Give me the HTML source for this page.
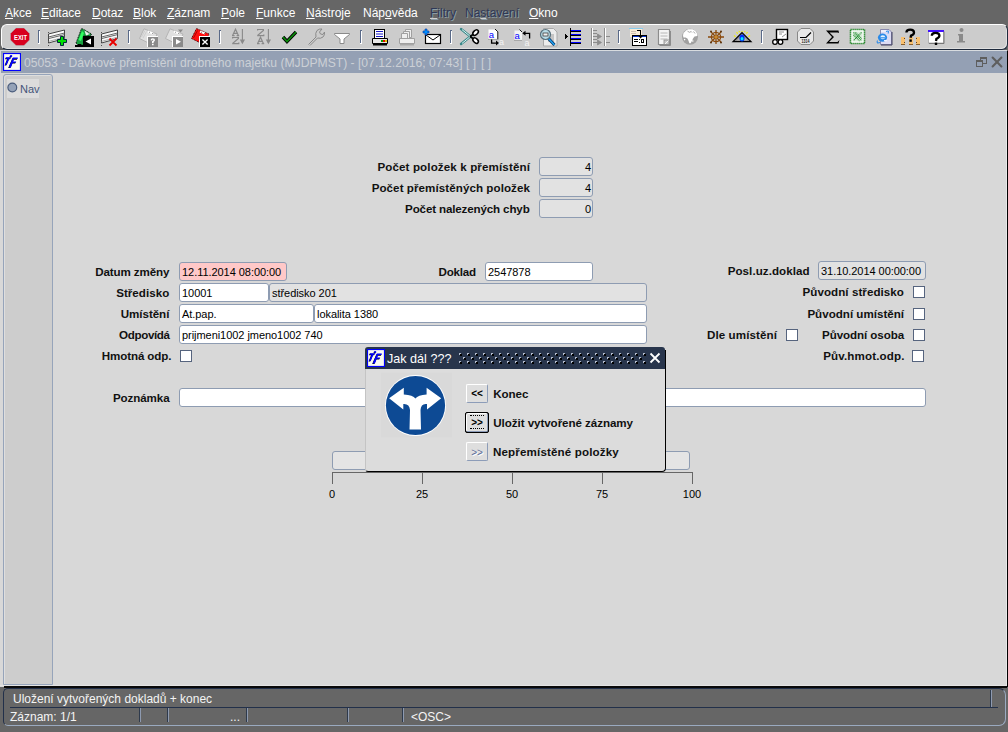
<!DOCTYPE html>
<html><head><meta charset="utf-8">
<style>
*{margin:0;padding:0;box-sizing:border-box}
html,body{width:1008px;height:732px;overflow:hidden;background:#666666;font-family:"Liberation Sans",sans-serif;font-size:12px}
.a{position:absolute;white-space:nowrap}
.m{position:absolute;top:6px;color:#fff;font-size:12px;line-height:14px;white-space:nowrap}
.m u{text-decoration:underline;text-underline-offset:1px}
.dis{color:#2e3856;text-shadow:1px 1px 0 #8c9ca4}
.dis u{text-decoration-color:#d0d0d0}
#tb{position:absolute;left:1px;top:24px;width:1007px;height:26px;background:#cccccc;border-radius:6px;border-top:1px solid #fff;border-left:1px solid #fff;border-bottom:1px solid #1e2a3c;border-right:1px solid #1e2a3c;box-shadow:inset -1px -1px 0 #e0e0e0}
#title{position:absolute;left:0px;top:50px;width:1007px;height:23px;background:#94a0b4;border-top:1px solid #d8dce0;border-left:1px solid #d8d8d8}
#content{position:absolute;left:0px;top:73px;width:1008px;height:614px;background:#d8d8d8;border-right:1px solid #000;box-shadow:inset -1px 0 0 #e8e8e8}
#nav{position:absolute;left:3px;top:74px;width:50px;height:611px;background:#cdcdcd;border:1px solid #96a4ba;border-radius:3px 3px 0 0;box-shadow:inset 1px 1px 0 #dedede}
.lbl{position:absolute;font-weight:bold;font-size:11.6px;color:#111;white-space:nowrap;line-height:14px}
.fld{position:absolute;background:#fff;border:1px solid #8e9cb2;border-radius:3px;font-size:11px;letter-spacing:-0.05px;line-height:16px;padding-top:1px;padding-left:2px;color:#000;white-space:nowrap;overflow:hidden}
.ro{background:#e2e2e2}
.chk{position:absolute;width:12px;height:12px;background:#fff;border:1px solid #56647e}
#status{position:absolute;left:0;top:688px;width:1008px;height:44px;background:#666}
.st{position:absolute;color:#f4f4f4;font-size:12px;line-height:14px;white-space:nowrap}
.vs{position:absolute;top:708px;width:2px;height:14px;border-left:1px solid #2e3a4c;border-right:1px solid #8e9ab0}
#dlg{position:absolute;left:365px;top:350px;width:301px;height:122px;background:#dcdcdc;border-left:1px solid #c4c4c4;border-right:1px solid #000;border-bottom:1px solid #000;border-radius:0 0 4px 3px}
.btn{position:absolute;width:22px;height:19px;background:#dedede;border:1px solid #fff;border-right-color:#8c9cb8;border-bottom-color:#8c9cb8;border-radius:2px;font-size:10px;font-weight:bold;line-height:18px;text-align:center;color:#000}
.tick{position:absolute;top:472px;width:1px;height:12px;background:#666}
.tl{position:absolute;top:488px;font-size:11px;line-height:12px;color:#000;width:40px;text-align:center}
</style></head><body>
<span class="m" style="left:5px"><u>A</u>kce</span>
<span class="m" style="left:41px"><u>E</u>ditace</span>
<span class="m" style="left:92px"><u>D</u>otaz</span>
<span class="m" style="left:133px"><u>B</u>lok</span>
<span class="m" style="left:167px"><u>Z</u>áznam</span>
<span class="m" style="left:221px"><u>P</u>ole</span>
<span class="m" style="left:256px"><u>F</u>unkce</span>
<span class="m" style="left:306px"><u>N</u>ástroje</span>
<span class="m" style="left:363px">Náp<u>o</u>věda</span>
<span class="m dis" style="left:430px"><u>F</u>iltry</span>
<span class="m dis" style="left:465px">Na<u>s</u>tavení</span>
<span class="m" style="left:529px"><u>O</u>kno</span>

<div id="tb"></div>
<svg class="a" style="left:0;top:0" width="1008" height="52" viewBox="0 0 1008 52">
<g shape-rendering="crispEdges">
<path d="M38 30h2v1h-1v12h-1z" fill="#5a6a88"/><path d="M39 31h1v13h-2v-1h1z" fill="#fff"/>
<path d="M128 30h2v1h-1v12h-1z" fill="#5a6a88"/><path d="M129 31h1v13h-2v-1h1z" fill="#fff"/>
<path d="M219 30h2v1h-1v12h-1z" fill="#5a6a88"/><path d="M220 31h1v13h-2v-1h1z" fill="#fff"/>
<path d="M360 30h2v1h-1v12h-1z" fill="#5a6a88"/><path d="M361 31h1v13h-2v-1h1z" fill="#fff"/>
<path d="M450 30h2v1h-1v12h-1z" fill="#5a6a88"/><path d="M451 31h1v13h-2v-1h1z" fill="#fff"/>
<path d="M618 30h2v1h-1v12h-1z" fill="#5a6a88"/><path d="M619 31h1v13h-2v-1h1z" fill="#fff"/>
<path d="M761 30h2v1h-1v12h-1z" fill="#5a6a88"/><path d="M762 31h1v13h-2v-1h1z" fill="#fff"/>
</g>
<!-- EXIT -->
<polygon points="16,28 24,28 29.5,33.5 29.5,40 24,45.5 16,45.5 10.5,40 10.5,33.5" fill="#d8001e" stroke="#9ad0d0" stroke-width="0.4"/>
<text x="14" y="39.8" font-family="Liberation Sans" font-weight="bold" font-size="7.4" fill="#fff" textLength="13" lengthAdjust="spacingAndGlyphs">EXIT</text>
<!-- rows add -->
<path d="M48.5 34 L64.5 30 L64.5 38.5 L48.5 43 Z" fill="#fafafa" stroke="#444" stroke-width="1"/>
<path d="M48.5 37 L64.5 33 M48.5 38.6 L64.5 34.6" stroke="#555" stroke-width="0.9" fill="none"/>
<path d="M48.5 41.4 L64.5 37.2" stroke="#999" stroke-width="0.8" fill="none"/>
<g shape-rendering="crispEdges" fill="#555"><rect x="48" y="32" width="1" height="1"/><rect x="48" y="45" width="1" height="1"/></g>
<path d="M60.5 36.5h3v3h3v3h-3v3h-3v-3h-3v-3h3z" fill="#00e000" stroke="#002838" stroke-width="1"/>
<!-- green folder -->
<path d="M76 43 L81.5 28.5 L84 29.5 L91.5 34 L90.5 36 L84 36 L84 45 L78 45 Z" fill="#18a040" stroke="#000" stroke-width="0.9" stroke-dasharray="1,0.8"/>
<path d="M78.5 40 L82 31 L84 33 L81 41 Z" fill="#30ff60"/>
<path d="M84.5 30.5 L90 34 L86 35.5 Z" fill="#f0f0f0"/>
<path d="M86.5 31.8h1M88 32.8h1" stroke="#666" stroke-width="0.8"/>
<g shape-rendering="crispEdges"><rect x="83" y="36" width="11" height="11" fill="#000"/><rect x="84" y="37" width="9" height="9" fill="#000"/><rect x="75" y="45" width="9" height="2" fill="#000"/><rect x="78" y="44" width="3" height="1" fill="#000"/></g>
<path d="M85.5 41.5 L91 38.5 L91 44.5 Z" fill="#fff"/>
<!-- rows delete -->
<path d="M101.5 34 L117.5 30 L117.5 38.5 L101.5 43 Z" fill="#fafafa" stroke="#444" stroke-width="1"/>
<path d="M101.5 37 L117.5 33 M101.5 38.6 L117.5 34.6" stroke="#555" stroke-width="0.9" fill="none"/>
<path d="M101.5 41.4 L117.5 37.2" stroke="#999" stroke-width="0.8" fill="none"/>
<g shape-rendering="crispEdges" fill="#555"><rect x="101" y="32" width="1" height="1"/><rect x="101" y="45" width="1" height="1"/></g>
<path d="M109.5 38.5 L116.5 45.5 M116.5 38.5 L109.5 45.5" stroke="#e80000" stroke-width="1.8"/>
<!-- gray disk ? -->
<path d="M139.5 38.5 L144 28.8 L157 34 L152.5 45 Z" fill="#e0e0e0" stroke="#b4b4b4" stroke-width="1"/>
<path d="M141.5 37 L145 30.5 M143 38 L146.5 31.5" stroke="#c8c8c8" stroke-width="0.8"/>
<path d="M148 31.5l5 2" stroke="#fff" stroke-width="2"/><path d="M149 32l1 0.5M152 33.2l1 0.4" stroke="#777" stroke-width="0.8"/>
<g shape-rendering="crispEdges"><rect x="147" y="36" width="11" height="11" fill="#fff"/><rect x="148" y="37" width="10" height="10" fill="#8a8a8a"/></g>
<path d="M150.6 40.2 Q150.6 38.3 152.8 38.3 Q155 38.3 155 40 Q155 41.2 153.6 41.9 L153.6 43 L152 43 L152 41.3 Q153.4 40.8 153.4 40.1 Q153.4 39.6 152.8 39.6 Q152.2 39.6 152.2 40.4 Z M152 43.8h1.6v1.5h-1.6z" fill="#fff"/>
<!-- gray disk play -->
<path d="M165.5 38.5 L170 28.8 L183 34 L178.5 45 Z" fill="#e0e0e0" stroke="#b4b4b4" stroke-width="1"/>
<path d="M174 31.5l5 2" stroke="#fff" stroke-width="2"/><path d="M175 32l1 0.5M178 33.2l1 0.4" stroke="#777" stroke-width="0.8"/>
<path d="M178 29.5h5l-2.5 3z" fill="#8a8a8a"/>
<g shape-rendering="crispEdges"><rect x="172" y="36" width="11" height="11" fill="#fff"/><rect x="173" y="37" width="10" height="10" fill="#8a8a8a"/></g>
<path d="M176 39 L181 41.8 L176 44.6 Z" fill="#fff"/>
<!-- red disk x -->
<path d="M191.5 38.5 L196.5 28.5 L209 34 L204.5 45 Z" fill="#ff1010" stroke="#300" stroke-width="0.9" stroke-dasharray="1,0.7"/>
<path d="M193.5 38 L197.5 30.5" stroke="#b00000" stroke-width="1"/>
<path d="M200 31.5l5 2" stroke="#fff" stroke-width="2"/><path d="M201 32l1 0.5M204 33.2l1 0.4" stroke="#555" stroke-width="0.8"/>
<g shape-rendering="crispEdges"><rect x="199" y="36" width="11" height="11" fill="#fff"/><rect x="200" y="37" width="10" height="10" fill="#000"/></g>
<path d="M202.4 39.6 L207.6 44.4 M207.6 39.6 L202.4 44.4" stroke="#fff" stroke-width="1.4"/>
<!-- AZ sort -->
<g fill="none" stroke="#8a8a8a" stroke-width="1.2">
<path d="M232.6 35.5 L235.5 29.2 L238.4 35.5 M233.8 33.3h3.4 M232 35.6h2.6 M236.6 35.6h2.6"/>
<path d="M232.6 38.5v-1h5.8v1 L232.8 43.2v0.4h6v-1.2"/>
<path d="M257.6 30.5v-1h5.8v1 L257.8 35.2v0.4h6v-1.2"/>
<path d="M257.6 43.5 L260.5 37.2 L263.4 43.5 M258.8 41.3h3.4 M257 43.6h2.6 M261.6 43.6h2.6"/>
<path d="M242.4 29v14 M268.4 29v14" stroke-width="1.1"/>
</g>
<path d="M239.8 39.5h5.2l-2.6 4.8z M265.8 39.5h5.2l-2.6 4.8z" fill="#8a8a8a"/>
<!-- check -->
<path d="M283 37 L287 41.5 L296 32" fill="none" stroke="#000" stroke-width="3.4"/>
<path d="M283 37 L287 41.5 L296 32" fill="none" stroke="#0a8a0a" stroke-width="1.8"/>
<!-- wrench -->
<path d="M308.5 44.5 L316 37 Q315 33 317 30.5 Q319.5 28.5 322 29 L319.5 32 L320.5 34 L323 34.5 L324.5 32 Q325 35 323 37 Q320.5 39 317.5 38 L310 45.5" fill="none" stroke="#8a8a8a" stroke-width="1"/>
<!-- funnel -->
<path d="M334.5 33.5 L349.5 33.5 L349.5 34.5 L344 39 L344 43.5 L340 43.5 L340 39 L334.5 34.5 Z" fill="#fff" stroke="#8a8a8a" stroke-width="1"/>
<!-- printer -->
<rect x="374.5" y="29.5" width="10" height="9" fill="#fff" stroke="#000"/>
<path d="M376 31.5h7M376 34h7M376 36.5h7" stroke="#0000c0" stroke-width="0.9"/>
<path d="M372.5 38.5h15v5h-15z" fill="#e8e8e8" stroke="#000"/>
<path d="M373 44h14v1.5h-14z" fill="#000"/>
<path d="M381 40h2v2h-2z" fill="#00a000"/><path d="M383 40h2v2h-2z" fill="#e00000"/><path d="M385 40h2v2h-2z" fill="#e0c000"/>
<!-- gray printers -->
<g fill="#eee" stroke="#a0a0a0">
<path d="M405.5 29.5h6v8h-6z"/><path d="M403.5 31.5h6v8h-6z"/><path d="M401.5 33.5h6v6h-6z"/>
<path d="M399.5 38.5h15v5h-15z"/>
</g>
<path d="M400 44h14v1.5h-14z" fill="#a8a8a8"/>
<!-- mail plus -->
<rect x="425.5" y="34.5" width="15" height="9" fill="#fff" stroke="#000" stroke-width="1.2"/>
<path d="M426 35 L433 40 L440 35" fill="none" stroke="#000"/>
<path d="M425 29h2v2h2v2h-2v2h-2v-2h-2v-2h2z" fill="#0090ff" stroke="#0030a0" stroke-width="0.6"/>
<!-- scissors -->
<path d="M461 29 L471 37 M461 44 L471 36" stroke="#3a8888" stroke-width="2.4" stroke-linecap="round"/>
<path d="M462 29.6 L470.5 36.6 M462 43.4 L470.5 36.4" stroke="#d8f4f4" stroke-width="1"/>
<ellipse cx="475.6" cy="32.6" rx="3.2" ry="2.1" transform="rotate(-45 475.6 32.6)" fill="#fff" stroke="#000" stroke-width="1.5"/>
<ellipse cx="475.6" cy="40.6" rx="3.2" ry="2.1" transform="rotate(45 475.6 40.6)" fill="#fff" stroke="#000" stroke-width="1.5"/>
<path d="M470 36.5 L473 34.5 M470 36.5 L473 38.5" stroke="#000" stroke-width="1.6"/>
<!-- a -> a -->
<path d="M488.5 29.5h7l2 2v7.5h-9z" fill="#fff"/>
<path d="M495 29l2.8 2.8v7.6" fill="none" stroke="#000" stroke-width="0.9"/>
<path d="M488 39.4h9.5" stroke="#999" stroke-width="0.8"/>
<text x="488.8" y="38" font-family="Liberation Sans" font-size="9.5" fill="#0000ff">a</text>
<path d="M491.6 39.5v3.6h5" fill="none" stroke="#000" stroke-width="1.3"/><path d="M496 40.6l3 2.5l-3 2.5z" fill="#000"/>
<text x="499" y="45" font-family="Liberation Sans" font-size="9" fill="#f4f4f4">a</text>
<!-- a <- a -->
<path d="M514.5 30.5h6l1.5 1.5v8h-7.5z" fill="#f4f4f4"/>
<path d="M519.5 29.5l2.5 2.5" stroke="#000" stroke-width="0.9"/>
<path d="M514 40.4h8" stroke="#999" stroke-width="0.8"/>
<text x="514.6" y="38.6" font-family="Liberation Sans" font-size="9.5" fill="#0000ff">a</text>
<path d="M529.6 38.5v-5.2h-5" fill="none" stroke="#000" stroke-width="1.3"/><path d="M525.5 30.8l-3.2 2.5l3.2 2.5z" fill="#000"/>
<text x="524.5" y="45.5" font-family="Liberation Sans" font-size="9" fill="#f4f4f4">a</text>
<!-- magnifier doc -->
<path d="M543.5 28.5h10l3.5 3.5v14h-13.5z" fill="#ececec" stroke="#a8a8a8"/>
<rect x="548" y="34" width="6" height="8" fill="#c4c4c4"/>
<path d="M548.5 38.5 L554.5 45" stroke="#003060" stroke-width="3"/>
<path d="M548.5 38.5 L554.5 45" stroke="#20a0f0" stroke-width="1.6"/>
<circle cx="545.5" cy="34.5" r="5" fill="#b8dce8" stroke="#58707c" stroke-width="1.2"/>
<rect x="543" y="33" width="5" height="3" fill="#f0f0f0" stroke="#404040" stroke-width="0.8"/>
<!-- blue list -->
<g shape-rendering="crispEdges">
<rect x="570" y="28" width="1" height="18" fill="#000"/>
<path d="M565 34h1v1h1v1h1v1h-1v1h-1v1h-1z" fill="#000"/>
<rect x="571" y="30" width="10" height="1" fill="#0000ff"/><rect x="571" y="31" width="10" height="1" fill="#000"/>
<rect x="571" y="34" width="10" height="1" fill="#0000ff"/><rect x="571" y="35" width="10" height="1" fill="#000"/>
<rect x="571" y="38" width="10" height="1" fill="#0000ff"/><rect x="571" y="39" width="10" height="1" fill="#000"/>
<rect x="571" y="42" width="10" height="1" fill="#0000ff"/><rect x="571" y="43" width="10" height="1" fill="#000"/>
</g>
<!-- gray tree -->
<g shape-rendering="crispEdges">
<rect x="591" y="28" width="1" height="18" fill="#8c8c8c"/><rect x="592" y="28" width="1" height="18" fill="#fff"/>
<rect x="604" y="28" width="1" height="18" fill="#8c8c8c"/><rect x="605" y="28" width="1" height="18" fill="#fff"/>
<g fill="#8c8c8c"><rect x="593" y="30" width="4" height="1"/><rect x="593" y="33" width="4" height="1"/><rect x="593" y="36" width="4" height="1"/><rect x="593" y="39" width="4" height="1"/><rect x="593" y="42" width="4" height="1"/>
<rect x="606" y="36" width="4" height="1"/><rect x="606" y="42" width="4" height="1"/></g>
</g>
<path d="M597.5 34l4 2.5l-4 2.5z M597.5 40l4 2.5l-4 2.5z M596 36.5h2 M596 42.5h2" fill="#8c8c8c" stroke="#8c8c8c" stroke-width="0.8"/>
<!-- doc import -->
<g shape-rendering="crispEdges">
<rect x="629" y="28" width="14" height="1" fill="#88ccee"/>
<rect x="630" y="29" width="12" height="8" fill="#f8ecd8"/>
<rect x="631" y="31" width="5" height="1" fill="#d0c0b0"/><rect x="631" y="33" width="5" height="1" fill="#d0c0b0"/>
<rect x="632" y="35" width="15" height="11" fill="#000"/>
<rect x="633" y="37" width="13" height="8" fill="#fff"/>
<rect x="633" y="36" width="13" height="1" fill="#0030d0"/>
<rect x="634" y="39" width="4" height="1" fill="#000"/><rect x="634" y="41" width="4" height="1" fill="#000"/><rect x="639" y="39" width="1" height="1" fill="#000"/><rect x="639" y="42" width="1" height="1" fill="#000"/>
<rect x="641" y="39" width="3" height="4" fill="#000"/><rect x="642" y="40" width="1" height="2" fill="#fff"/>
<rect x="637" y="30" width="4" height="1" fill="#000"/><rect x="640" y="30" width="1" height="6" fill="#000"/>
</g>
<path d="M637.6 35h6l-3 3.4z" fill="#000"/>
<!-- gray doc -->
<path d="M658.5 29.5h11v15h-11z" fill="#f4f4f4" stroke="#8c8c8c" stroke-width="1.2"/>
<path d="M670.5 31v14.5h-11" fill="none" stroke="#8c8c8c" stroke-width="1"/>
<path d="M660.5 33h7M660.5 36h7M660.5 39h7" stroke="#b0b0b0" stroke-width="0.9"/>
<rect x="664" y="40" width="5" height="4.5" fill="#c8c8c8" stroke="#8c8c8c" stroke-width="0.8"/>
<path d="M665 44l3.5-3.5" stroke="#fff" stroke-width="0.8"/>
<!-- globe -->
<circle cx="690" cy="36.8" r="8" fill="#a0a0a0"/>
<path d="M683 35.5 Q683.5 32 686 30.5 L688 29.3 L692.5 29.3 Q696 30.5 697.3 34 L697.3 36 L694.5 36.5 L693 38.5 L692.2 40.5 L690.6 43.2 L689.4 43.2 L688.4 40.5 L687.4 38.5 L685.6 37.4 L683.4 37.4 Z" fill="#fff"/>
<path d="M687.5 31.2 L689.5 32.3 L691.2 31.5 L692 32.5 M693.5 31.5 L695 33.5" fill="none" stroke="#a0a0a0" stroke-width="0.9"/>
<circle cx="684.6" cy="39.6" r="0.8" fill="#fff"/><circle cx="692.8" cy="41" r="0.8" fill="#fff"/>
<!-- ship wheel -->
<g stroke="#8a4a0c" stroke-width="1.3" fill="none">
<circle cx="716" cy="37" r="4.6"/>
<path d="M708 37h16M716 30v14M711 32l10 10M721 32l-10 10"/>
</g>
<g fill="#5a3008"><circle cx="711" cy="31.6" r="1"/><circle cx="721" cy="31.6" r="1"/><circle cx="711" cy="42.4" r="1"/><circle cx="721" cy="42.4" r="1"/></g>
<circle cx="716" cy="37" r="1.8" fill="#c88a30"/>
<!-- eye triangle -->
<path d="M733 41.6 L742 32.6 L751 41.6 Z" fill="#8c8c8c" stroke="#000" stroke-width="1.2" stroke-linejoin="miter"/>
<path d="M736.5 40.5 L742 35 L747.5 40.5 Z" fill="#b4b4b4"/>
<ellipse cx="742" cy="38" rx="2.6" ry="3.4" fill="#0030f0"/>
<ellipse cx="742" cy="38.8" rx="1.5" ry="1.8" fill="#00e8ff"/>
<g stroke="#f0f000" stroke-width="1.1"><path d="M734 35.5l1.5 1.2M750 35.5l-1.5 1.2M736.5 32.2l1.2 1.4M747.5 32.2l-1.2 1.4M742 31v1M738.8 31.2l0.8 1M745.2 31.2l-0.8 1"/></g>
<!-- chart glasses -->
<rect x="776.5" y="29.5" width="11" height="10" fill="#fff" stroke="#000" stroke-width="1.4"/>
<path d="M779 32h5M779 34h3M782 37l4-3" stroke="#777" stroke-width="0.8"/>
<circle cx="775" cy="42" r="2.3" fill="#fff" stroke="#000" stroke-width="1.3"/>
<circle cx="780.5" cy="42" r="2.3" fill="#fff" stroke="#000" stroke-width="1.3"/>
<!-- clock -->
<polygon points="801,28.5 810,28.5 813.5,32 813.5,41 810,44.5 801,44.5 797.5,41 797.5,32" fill="#e8e8e8" stroke="#888" stroke-width="1"/>
<path d="M800 37.5h6l5-5" stroke="#000" stroke-width="1.2" fill="none"/>
<text x="805.5" y="43" font-family="Liberation Sans" font-weight="bold" font-size="4.6" fill="#222" text-anchor="middle" textLength="8" lengthAdjust="spacingAndGlyphs">1314</text>
<!-- sigma -->
<path d="M826 30.5 L838.5 30.5 L839 33 L837.5 32.5 L829.5 32.5 L834 37 L829 42 L837.5 42 L839.5 40 L838.5 43.5 L826 43.5 L832 37 Z" fill="#000"/>
<!-- excel -->
<rect x="850.5" y="29.5" width="14" height="14" fill="#fff" stroke="#0a7a10" stroke-width="1.6" stroke-dasharray="1.2,0.8"/>
<rect x="852.5" y="31.5" width="10" height="10" fill="#d8ecd8"/>
<path d="M853.5 32.5l8 8M861.5 32.5l-8 8M853.5 35l6 6M855.5 32.5l6 6" stroke="#1a8a2a" stroke-width="1.1" stroke-dasharray="1,0.6"/>
<!-- IE doc -->
<path d="M880.5 29.5h8.5l2.5 2.5v12.5h-11z" fill="#dcdcf4" stroke="#8080a8" stroke-width="0.9"/>
<path d="M892 32v13h-11" fill="none" stroke="#404060" stroke-width="1"/>
<path d="M881 31h7" stroke="#fff" stroke-width="1.2"/>
<ellipse cx="882.5" cy="37.6" rx="4.6" ry="4.2" fill="#2a8ae8"/>
<ellipse cx="882.8" cy="37.2" rx="2.4" ry="2" fill="#e8f4ff"/>
<path d="M880 37.8h5.6" stroke="#2a8ae8" stroke-width="1.1"/>
<path d="M884 40.6h3" stroke="#e8f4ff" stroke-width="1.2"/>
<path d="M877.5 40.5 Q876 44 880 42.5 M886 31.5 Q889.5 30 888 33.5" fill="none" stroke="#2a8ae8" stroke-width="1.1"/>
<!-- ? blocks -->
<g shape-rendering="crispEdges">
<rect x="901" y="37" width="4" height="7" fill="#f8c070"/><rect x="909" y="37" width="4" height="7" fill="#f8c070"/><rect x="916" y="37" width="4" height="7" fill="#f8c070"/>
<rect x="901" y="44" width="4" height="1" fill="#886030"/><rect x="909" y="44" width="4" height="1" fill="#886030"/><rect x="916" y="44" width="4" height="1" fill="#886030"/>
<rect x="904" y="38" width="1" height="1" fill="#604020"/><rect x="916" y="38" width="1" height="1" fill="#604020"/><rect x="904" y="42" width="1" height="1" fill="#604020"/><rect x="916" y="42" width="1" height="1" fill="#604020"/>
</g>
<path d="M906.4000000000001 32.6 Q906.4000000000001 29.6 910.2 29.6 Q914.0 29.6 914.0 32.4 Q914.0 34.6 911.0 35.6 L910.6 37.8" fill="none" stroke="#000" stroke-width="2.3"/><rect x="909.4000000000001" y="39.4" width="2.4" height="2.4" fill="#000"/>
<!-- ? window -->
<rect x="928.5" y="30.5" width="15" height="12.5" fill="#fff" stroke="#a8a8a8" stroke-width="0.8"/>
<rect x="928" y="30" width="16" height="2" fill="#4010ff"/>
<path d="M944 31.5v12h-15" fill="none" stroke="#707070" stroke-width="0.9"/>
<path d="M931.8000000000001 35.800000000000004 Q931.8000000000001 32.800000000000004 935.6 32.800000000000004 Q939.4 32.800000000000004 939.4 35.6 Q939.4 37.800000000000004 936.4 38.800000000000004 L936.0 41.0" fill="none" stroke="#000" stroke-width="2.3"/><rect x="934.8000000000001" y="42.6" width="2.4" height="2.4" fill="#000"/>
<!-- i -->
<circle cx="961.5" cy="30" r="2" fill="#8a8a8a"/>
<path d="M958 34h5v7h2v1.5h-8v-1.5h2v-5.5h-1z" fill="#8a8a8a"/>
</svg>


<div id="title"></div>
<svg class="a" style="left:3px;top:53px" width="18" height="18" viewBox="0 0 18 18">
<rect x="0.5" y="0.5" width="17" height="17" fill="#fafaf2" stroke="#0000ff" stroke-width="1.2"/>
<g fill="#000" transform="translate(-0.5,0.6)"><circle cx="8.2" cy="3" r="1.1"/><path d="M3 4.2h4.9l-0.35 1.5h-1.2l-2.3 5.6q-0.3 0.7-1.1 0.7h-0.9l2.5-6.3h-1.9z"/><path d="M9.9 4.6h5l-0.5 1.5h-3.3l-0.8 2.3h2.9l-0.5 1.4h-2.9l-1.9 4.6h-2.2z"/></g>
<g fill="#0000ff"><circle cx="8.2" cy="3" r="1.1"/><path d="M3 4.2h4.9l-0.35 1.5h-1.2l-2.3 5.6q-0.3 0.7-1.1 0.7h-0.9l2.5-6.3h-1.9z"/><path d="M9.9 4.6h5l-0.5 1.5h-3.3l-0.8 2.3h2.9l-0.5 1.4h-2.9l-1.9 4.6h-2.2z"/></g>
</svg>
<span class="a" style="left:24px;top:56px;font-size:12.15px;line-height:14px;color:#ccd0d6">05053 - Dávkové přemístění drobného majetku (MJDPMST) - [07.12.2016; 07:43]</span><span class="a" style="left:466px;top:56px;font-size:12.15px;line-height:14px;color:#ccd0d6">[ ]</span><span class="a" style="left:481px;top:56px;font-size:12.15px;line-height:14px;color:#ccd0d6">[ ]</span>

<svg class="a" style="left:970px;top:52px" width="38" height="20" viewBox="0 0 38 20" shape-rendering="crispEdges">
<path d="M10 5h7v7h-4v-1h3v-4h-5v1h-1z" fill="#5e5e5e"/>
<path d="M6 8h7v7h-7z M7 10v4h5v-4z" fill="#5e5e5e" fill-rule="evenodd"/>
</svg>
<svg class="a" style="left:990px;top:55px" width="14" height="14" viewBox="0 0 14 14"><path d="M2.6 2.6l8.8 8.8M11.4 2.6l-8.8 8.8" stroke="#5e5e5e" stroke-width="2.1" stroke-linecap="round"/></svg>
<div class="a" style="left:1007px;top:51px;width:1px;height:636px;background:#000"></div>
<div id="content"></div>
<div id="nav"></div>
<div class="a" style="left:7px;top:79px;width:32px;height:19px;background:#dcdcdc"></div>
<svg class="a" style="left:7px;top:82px" width="11" height="11" viewBox="0 0 11 11"><circle cx="5.3" cy="5.5" r="4.4" fill="#94a2b8" stroke="#4a5c7c" stroke-width="1.2"/></svg>
<span class="a" style="left:20px;top:83px;font-size:11px;line-height:12px;color:#44547a">Nav</span>

<!-- counts -->
<span class="lbl" style="right:478.0px;top:160px;letter-spacing:0.12px">Počet položek k přemístění</span>
<span class="lbl" style="right:478.0px;top:181px;letter-spacing:0.068px">Počet přemístěných položek</span>
<span class="lbl" style="right:478.4px;top:202px;letter-spacing:-0.145px">Počet nalezených chyb</span>
<div class="fld ro" style="left:539px;top:157px;width:54px;height:19px;text-align:right;padding-right:1px">4</div>
<div class="fld ro" style="left:539px;top:178px;width:54px;height:19px;text-align:right;padding-right:1px">4</div>
<div class="fld ro" style="left:539px;top:199px;width:54px;height:19px;text-align:right;padding-right:1px">0</div>

<!-- main form -->
<span class="lbl" style="right:838.7px;top:265px;letter-spacing:-0.12px">Datum změny</span>
<span class="lbl" style="right:838.7px;top:286px;letter-spacing:0.038px">Středisko</span>
<span class="lbl" style="right:838.7px;top:307px;letter-spacing:-0.057px">Umístění</span>
<span class="lbl" style="right:838.4px;top:328px;letter-spacing:-0.371px">Odpovídá</span>
<span class="lbl" style="right:836.6px;top:349px;letter-spacing:-0.11px">Hmotná odp.</span>
<div class="fld" style="left:179px;top:262px;width:108px;height:19px;background:#ffc8c8">12.11.2014 08:00:00</div>
<div class="fld" style="left:179px;top:283px;width:90px;height:19px">10001</div>
<div class="fld ro" style="left:269px;top:283px;width:378px;height:19px">středisko 201</div>
<div class="fld" style="left:179px;top:304px;width:135px;height:19px">At.pap.</div>
<div class="fld" style="left:314px;top:304px;width:333px;height:19px">lokalita 1380</div>
<div class="fld" style="left:179px;top:325px;width:468px;height:19px">prijmeni1002 jmeno1002 740</div>
<div class="chk" style="left:180px;top:350px"></div>

<span class="lbl" style="right:532.0px;top:265px;letter-spacing:-0.2px">Doklad</span>
<div class="fld" style="left:485px;top:262px;width:108px;height:19px">2547878</div>

<span class="lbl" style="right:198.3px;top:264px;letter-spacing:0.062px">Posl.uz.doklad</span>
<div class="fld ro" style="left:818px;top:261px;width:108px;height:19px">31.10.2014 00:00:00</div>
<span class="lbl" style="right:104.0px;top:285px;letter-spacing:0.062px">Původní středisko</span>
<div class="chk" style="left:913px;top:286px"></div>
<span class="lbl" style="right:104.0px;top:307px;letter-spacing:0.0px">Původní umístění</span>
<div class="chk" style="left:913px;top:308px"></div>
<span class="lbl" style="right:231.0px;top:328px;letter-spacing:0.091px">Dle umístění</span>
<div class="chk" style="left:786px;top:329px"></div>
<span class="lbl" style="right:104.0px;top:328px;letter-spacing:-0.083px">Původní osoba</span>
<div class="chk" style="left:913px;top:329px"></div>
<span class="lbl" style="right:103.5px;top:349px;letter-spacing:0.125px">Pův.hmot.odp.</span>
<div class="chk" style="left:912px;top:350px"></div>

<span class="lbl" style="right:838.5px;top:391px;letter-spacing:-0.1px">Poznámka</span>
<div class="fld" style="left:179px;top:388px;width:747px;height:19px"></div>

<!-- progress -->
<div class="fld ro" style="left:332px;top:451px;width:358px;height:19px;background:#e4e4e4"></div>
<div class="a" style="left:332px;top:472px;width:361px;height:1px;background:#666"></div>
<div class="tick" style="left:332px"></div>
<div class="tick" style="left:422px"></div>
<div class="tick" style="left:512px"></div>
<div class="tick" style="left:602px"></div>
<div class="tick" style="left:692px"></div>
<span class="tl" style="left:312px">0</span>
<span class="tl" style="left:402px">25</span>
<span class="tl" style="left:492px">50</span>
<span class="tl" style="left:582px">75</span>
<span class="tl" style="left:672px">100</span>

<!-- dialog -->
<div id="dlg"></div>
<div class="a" style="left:365px;top:347px;width:300px;height:22px;background:#28354c;border-radius:3px 3px 0 0"></div>
<svg class="a" style="left:367px;top:349px" width="18" height="18" viewBox="0 0 18 18">
<rect x="0.5" y="0.5" width="17" height="17" fill="#fafaf2" stroke="#0000ff" stroke-width="1.2"/>
<g fill="#000" transform="translate(-0.5,0.6)"><circle cx="8.2" cy="3" r="1.1"/><path d="M3 4.2h4.9l-0.35 1.5h-1.2l-2.3 5.6q-0.3 0.7-1.1 0.7h-0.9l2.5-6.3h-1.9z"/><path d="M9.9 4.6h5l-0.5 1.5h-3.3l-0.8 2.3h2.9l-0.5 1.4h-2.9l-1.9 4.6h-2.2z"/></g>
<g fill="#0000ff"><circle cx="8.2" cy="3" r="1.1"/><path d="M3 4.2h4.9l-0.35 1.5h-1.2l-2.3 5.6q-0.3 0.7-1.1 0.7h-0.9l2.5-6.3h-1.9z"/><path d="M9.9 4.6h5l-0.5 1.5h-3.3l-0.8 2.3h2.9l-0.5 1.4h-2.9l-1.9 4.6h-2.2z"/></g>
</svg>
<span class="a" style="left:387px;top:352px;font-size:12.6px;line-height:15px;color:#fff">Jak dál ???</span>
<svg class="a" style="left:458px;top:352px" width="192" height="14" viewBox="0 0 192 14" shape-rendering="crispEdges"><path d="M1 1h2v1h-1v1h-1z" fill="#b4bccc"/><path d="M2 2h2v2h-2z" fill="#000"/><path d="M9 1h2v1h-1v1h-1z" fill="#b4bccc"/><path d="M10 2h2v2h-2z" fill="#000"/><path d="M17 1h2v1h-1v1h-1z" fill="#b4bccc"/><path d="M18 2h2v2h-2z" fill="#000"/><path d="M25 1h2v1h-1v1h-1z" fill="#b4bccc"/><path d="M26 2h2v2h-2z" fill="#000"/><path d="M33 1h2v1h-1v1h-1z" fill="#b4bccc"/><path d="M34 2h2v2h-2z" fill="#000"/><path d="M41 1h2v1h-1v1h-1z" fill="#b4bccc"/><path d="M42 2h2v2h-2z" fill="#000"/><path d="M49 1h2v1h-1v1h-1z" fill="#b4bccc"/><path d="M50 2h2v2h-2z" fill="#000"/><path d="M57 1h2v1h-1v1h-1z" fill="#b4bccc"/><path d="M58 2h2v2h-2z" fill="#000"/><path d="M65 1h2v1h-1v1h-1z" fill="#b4bccc"/><path d="M66 2h2v2h-2z" fill="#000"/><path d="M73 1h2v1h-1v1h-1z" fill="#b4bccc"/><path d="M74 2h2v2h-2z" fill="#000"/><path d="M81 1h2v1h-1v1h-1z" fill="#b4bccc"/><path d="M82 2h2v2h-2z" fill="#000"/><path d="M89 1h2v1h-1v1h-1z" fill="#b4bccc"/><path d="M90 2h2v2h-2z" fill="#000"/><path d="M97 1h2v1h-1v1h-1z" fill="#b4bccc"/><path d="M98 2h2v2h-2z" fill="#000"/><path d="M105 1h2v1h-1v1h-1z" fill="#b4bccc"/><path d="M106 2h2v2h-2z" fill="#000"/><path d="M113 1h2v1h-1v1h-1z" fill="#b4bccc"/><path d="M114 2h2v2h-2z" fill="#000"/><path d="M121 1h2v1h-1v1h-1z" fill="#b4bccc"/><path d="M122 2h2v2h-2z" fill="#000"/><path d="M129 1h2v1h-1v1h-1z" fill="#b4bccc"/><path d="M130 2h2v2h-2z" fill="#000"/><path d="M137 1h2v1h-1v1h-1z" fill="#b4bccc"/><path d="M138 2h2v2h-2z" fill="#000"/><path d="M145 1h2v1h-1v1h-1z" fill="#b4bccc"/><path d="M146 2h2v2h-2z" fill="#000"/><path d="M153 1h2v1h-1v1h-1z" fill="#b4bccc"/><path d="M154 2h2v2h-2z" fill="#000"/><path d="M161 1h2v1h-1v1h-1z" fill="#b4bccc"/><path d="M162 2h2v2h-2z" fill="#000"/><path d="M169 1h2v1h-1v1h-1z" fill="#b4bccc"/><path d="M170 2h2v2h-2z" fill="#000"/><path d="M177 1h2v1h-1v1h-1z" fill="#b4bccc"/><path d="M178 2h2v2h-2z" fill="#000"/><path d="M185 1h2v1h-1v1h-1z" fill="#b4bccc"/><path d="M186 2h2v2h-2z" fill="#000"/><path d="M5 5h2v1h-1v1h-1z" fill="#b4bccc"/><path d="M6 6h2v2h-2z" fill="#000"/><path d="M13 5h2v1h-1v1h-1z" fill="#b4bccc"/><path d="M14 6h2v2h-2z" fill="#000"/><path d="M21 5h2v1h-1v1h-1z" fill="#b4bccc"/><path d="M22 6h2v2h-2z" fill="#000"/><path d="M29 5h2v1h-1v1h-1z" fill="#b4bccc"/><path d="M30 6h2v2h-2z" fill="#000"/><path d="M37 5h2v1h-1v1h-1z" fill="#b4bccc"/><path d="M38 6h2v2h-2z" fill="#000"/><path d="M45 5h2v1h-1v1h-1z" fill="#b4bccc"/><path d="M46 6h2v2h-2z" fill="#000"/><path d="M53 5h2v1h-1v1h-1z" fill="#b4bccc"/><path d="M54 6h2v2h-2z" fill="#000"/><path d="M61 5h2v1h-1v1h-1z" fill="#b4bccc"/><path d="M62 6h2v2h-2z" fill="#000"/><path d="M69 5h2v1h-1v1h-1z" fill="#b4bccc"/><path d="M70 6h2v2h-2z" fill="#000"/><path d="M77 5h2v1h-1v1h-1z" fill="#b4bccc"/><path d="M78 6h2v2h-2z" fill="#000"/><path d="M85 5h2v1h-1v1h-1z" fill="#b4bccc"/><path d="M86 6h2v2h-2z" fill="#000"/><path d="M93 5h2v1h-1v1h-1z" fill="#b4bccc"/><path d="M94 6h2v2h-2z" fill="#000"/><path d="M101 5h2v1h-1v1h-1z" fill="#b4bccc"/><path d="M102 6h2v2h-2z" fill="#000"/><path d="M109 5h2v1h-1v1h-1z" fill="#b4bccc"/><path d="M110 6h2v2h-2z" fill="#000"/><path d="M117 5h2v1h-1v1h-1z" fill="#b4bccc"/><path d="M118 6h2v2h-2z" fill="#000"/><path d="M125 5h2v1h-1v1h-1z" fill="#b4bccc"/><path d="M126 6h2v2h-2z" fill="#000"/><path d="M133 5h2v1h-1v1h-1z" fill="#b4bccc"/><path d="M134 6h2v2h-2z" fill="#000"/><path d="M141 5h2v1h-1v1h-1z" fill="#b4bccc"/><path d="M142 6h2v2h-2z" fill="#000"/><path d="M149 5h2v1h-1v1h-1z" fill="#b4bccc"/><path d="M150 6h2v2h-2z" fill="#000"/><path d="M157 5h2v1h-1v1h-1z" fill="#b4bccc"/><path d="M158 6h2v2h-2z" fill="#000"/><path d="M165 5h2v1h-1v1h-1z" fill="#b4bccc"/><path d="M166 6h2v2h-2z" fill="#000"/><path d="M173 5h2v1h-1v1h-1z" fill="#b4bccc"/><path d="M174 6h2v2h-2z" fill="#000"/><path d="M181 5h2v1h-1v1h-1z" fill="#b4bccc"/><path d="M182 6h2v2h-2z" fill="#000"/><path d="M1 9h2v1h-1v1h-1z" fill="#b4bccc"/><path d="M2 10h2v2h-2z" fill="#000"/><path d="M9 9h2v1h-1v1h-1z" fill="#b4bccc"/><path d="M10 10h2v2h-2z" fill="#000"/><path d="M17 9h2v1h-1v1h-1z" fill="#b4bccc"/><path d="M18 10h2v2h-2z" fill="#000"/><path d="M25 9h2v1h-1v1h-1z" fill="#b4bccc"/><path d="M26 10h2v2h-2z" fill="#000"/><path d="M33 9h2v1h-1v1h-1z" fill="#b4bccc"/><path d="M34 10h2v2h-2z" fill="#000"/><path d="M41 9h2v1h-1v1h-1z" fill="#b4bccc"/><path d="M42 10h2v2h-2z" fill="#000"/><path d="M49 9h2v1h-1v1h-1z" fill="#b4bccc"/><path d="M50 10h2v2h-2z" fill="#000"/><path d="M57 9h2v1h-1v1h-1z" fill="#b4bccc"/><path d="M58 10h2v2h-2z" fill="#000"/><path d="M65 9h2v1h-1v1h-1z" fill="#b4bccc"/><path d="M66 10h2v2h-2z" fill="#000"/><path d="M73 9h2v1h-1v1h-1z" fill="#b4bccc"/><path d="M74 10h2v2h-2z" fill="#000"/><path d="M81 9h2v1h-1v1h-1z" fill="#b4bccc"/><path d="M82 10h2v2h-2z" fill="#000"/><path d="M89 9h2v1h-1v1h-1z" fill="#b4bccc"/><path d="M90 10h2v2h-2z" fill="#000"/><path d="M97 9h2v1h-1v1h-1z" fill="#b4bccc"/><path d="M98 10h2v2h-2z" fill="#000"/><path d="M105 9h2v1h-1v1h-1z" fill="#b4bccc"/><path d="M106 10h2v2h-2z" fill="#000"/><path d="M113 9h2v1h-1v1h-1z" fill="#b4bccc"/><path d="M114 10h2v2h-2z" fill="#000"/><path d="M121 9h2v1h-1v1h-1z" fill="#b4bccc"/><path d="M122 10h2v2h-2z" fill="#000"/><path d="M129 9h2v1h-1v1h-1z" fill="#b4bccc"/><path d="M130 10h2v2h-2z" fill="#000"/><path d="M137 9h2v1h-1v1h-1z" fill="#b4bccc"/><path d="M138 10h2v2h-2z" fill="#000"/><path d="M145 9h2v1h-1v1h-1z" fill="#b4bccc"/><path d="M146 10h2v2h-2z" fill="#000"/><path d="M153 9h2v1h-1v1h-1z" fill="#b4bccc"/><path d="M154 10h2v2h-2z" fill="#000"/><path d="M161 9h2v1h-1v1h-1z" fill="#b4bccc"/><path d="M162 10h2v2h-2z" fill="#000"/><path d="M169 9h2v1h-1v1h-1z" fill="#b4bccc"/><path d="M170 10h2v2h-2z" fill="#000"/><path d="M177 9h2v1h-1v1h-1z" fill="#b4bccc"/><path d="M178 10h2v2h-2z" fill="#000"/><path d="M185 9h2v1h-1v1h-1z" fill="#b4bccc"/><path d="M186 10h2v2h-2z" fill="#000"/></svg>
<svg class="a" style="left:649px;top:352px" width="12" height="12" viewBox="0 0 12 12"><path d="M1.5 1.5l9 9M10.5 1.5l-9 9" stroke="#fff" stroke-width="1.8"/></svg>
<svg class="a" style="left:376px;top:368px" width="80" height="74" viewBox="0 0 80 74">
<rect x="5" y="4.5" width="71" height="65" fill="#d9d9d9"/>
<circle cx="39.5" cy="37.5" r="30.5" fill="#fff"/>
<circle cx="39.5" cy="37.5" r="29.6" fill="#0d4a94"/>
<path d="M33.5 61.5 L45 61.5 L44.5 42 Q45 35 51 36 L51 41.5 L65.2 30.3 L50.6 19.7 L50.6 26.5 Q42 27 39.4 30.5 Q37 27 27.8 26.5 L27.8 19.7 L13.1 30.3 L27.3 41.5 L27.3 36 Q33.5 35.5 34 42 Z" fill="#fff"/>
</svg>
<div class="btn" style="left:466px;top:384px">&lt;&lt;</div>
<span class="lbl" style="left:493.3px;top:387px;letter-spacing:-0.1px">Konec</span>
<div class="a" style="left:465px;top:412px;width:24px;height:21px;border:1px solid #000;border-radius:2px;background:#000"></div>
<div class="btn" style="left:466px;top:413px;width:22px;height:19px;line-height:18px">&gt;&gt;</div>
<div class="a" style="left:470px;top:415px;width:14px;height:14px;border-top:1px dotted #000;border-bottom:1px dotted #000"></div>
<span class="lbl" style="left:493.3px;top:416px;letter-spacing:-0.061px">Uložit vytvořené záznamy</span>
<div class="btn" style="left:466px;top:442px;color:#5a6c98;font-weight:normal;line-height:19px;text-shadow:1px 1px 0 #fff">&gt;&gt;</div>
<span class="lbl" style="left:493.0px;top:445px;letter-spacing:0.142px">Nepřemístěné položky</span>

<!-- status -->
<div class="a" style="left:0;top:685px;width:1007px;height:1px;background:#e4e4e4"></div><div class="a" style="left:4px;top:686px;width:1003px;height:2px;background:#0a0a0a"></div>
<div class="a" style="left:3px;top:688px;width:1003px;height:38px;border:1px solid #22304a;border-right-color:#9aaac0;border-bottom-color:#9aaac0;border-radius:5px 7px 7px 5px"></div>
<div class="a" style="left:10px;top:707px;width:988px;height:1px;background:#22304a"></div>
<span class="st" style="left:13px;top:692px">Uložení vytvořených dokladů + konec</span>
<span class="st" style="left:10px;top:710px">Záznam: 1/1</span>
<div class="vs" style="left:139px"></div>
<div class="vs" style="left:167px"></div>
<span class="st" style="left:230px;top:710px">...</span>
<div class="vs" style="left:246px"></div>
<div class="vs" style="left:347px"></div>
<div class="vs" style="left:402px"></div>
<span class="st" style="left:411px;top:710px">&lt;OSC&gt;</span>
<div class="vs" style="left:990px;top:690px;height:17px"></div>
</body></html>
